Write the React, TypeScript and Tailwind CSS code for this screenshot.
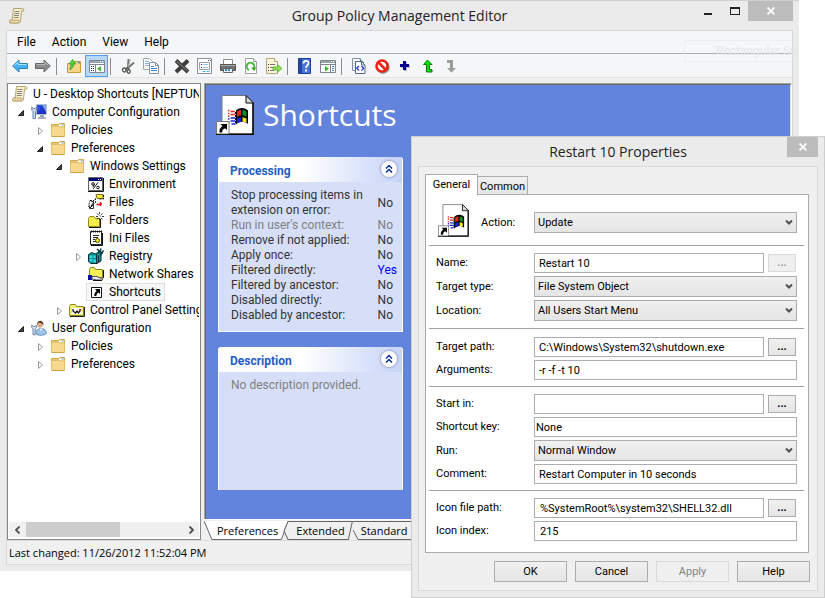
import React from 'react';

type IconProps = { className?: string };

const Svg: React.FC<{ size?: number; box?: string; className?: string; children: React.ReactNode }> = ({
  size = 16,
  box = '0 0 16 16',
  className,
  children
}) => (
  <svg width={size} height={size} viewBox={box} className={`shrink-0 ${className ?? ''}`} fill="none" aria-hidden="true">
    {children}
  </svg>
);

/* ---------- tree icons ---------- */

const ScrollIcon: React.FC<IconProps> = ({ className }) => (
  <Svg className={className}>
    <path d="M4.500.5h9c1.800 0 1.800 3 0 3h-1L11.500 13c-.2 1.600-1 2-2 2h-8c-1.500 0-1.500-3 .5-3h1.200z" fill="#f8efcd" stroke="#b3a47a" />
    <path d="M2 12h7.500c.8 0 .8 3-.5 3H2c-1.600 0-1.600-3 0-3z" stroke="#b9a672" fill="#ead9a4" />
    <path d="M12.500 1.500c1 0 1 1.500 0 1.500" stroke="#d9b765" />
    <path d="M5.500 3.500h5M5.300 5.500h5M5 7.500h5M4.800 9.500h5" stroke="#86867f" />
  </Svg>
);

const ComputerIcon = () => (
  <Svg>
    <path d="M5.500.5h10v10h-10z" fill="#1f35c4" stroke="#b7bfcc" />
    <path d="M6 1h5L8 7H6z" fill="#2f52d8" />
    <path d="M11 1h4v7z" fill="#7fa2f2" />
    <path d="M9 11h4v2H9z" fill="#9aa3b0" />
    <path d="M7 14h8" stroke="#a9b1bd" strokeWidth="2" />
    <path d="M.8 3v3.200L2 7.500v7h2.500v-7l1.200-1.300V3L4 4.500H2.500z" stroke="#6b87a8" fill="#c9d9ea" />
  </Svg>
);

const FolderIcon = () => (
  <Svg>
    <path d="M1.500 2.500h7l1-1h5v13h-13z" fill="#e9c66f" stroke="#d2a954" />
    <path d="M9 2.500h5v2H9z" fill="#fbfdff" />
    <path d="M12 2.500h1.500v1H12z" fill="#3f93dd" />
    <path d="M1.500 4.500h7l1 .5h5v9.500h-13z" fill="#f6d98d" stroke="#e3bd6c" />
    <path d="M2 14.500h12" stroke="#cfa24a" />
  </Svg>
);

const EnvironmentIcon = () => (
  <Svg>
    <path d="M.5 1.500h14v13H.5z" fill="#fff" stroke="#666" />
    <path d="M1 2h13v3H1z" fill="#00007b" />
    <path d="M10 3.500h4" stroke="#fff" strokeDasharray="1 1" />
    <circle cx="5" cy="8" r="1.300" stroke="#111" />
    <circle cx="10" cy="11.500" r="1.300" stroke="#111" />
    <path d="M5 13l5-6.500M6.500 8l-1.500 3" stroke="#111" />
    <path d="M0 15.500h15.500V2" stroke="#111" />
  </Svg>
);

const FilesIcon = () => (
  <Svg>
    <path d="M8 .5h7v4H9z" fill="#f5e832" stroke="#77741a" />
    <path d="M15.500 1v4H11" stroke="#111" strokeDasharray="2 1" />
    <path d="M2 6.500h4l1.500-2v4L3 12.500H.5z" fill="#fff" stroke="#222" strokeDasharray="2 1" />
    <path d="M5.500 8.500v6h-4v-3" fill="#eee" stroke="#333" />
    <path d="M3 7l3 1-3 4M2 14l3-3" stroke="#111" />
    <path d="M8.500 10.500h4M12.500 8v4M14 10h-2" stroke="#e01010" strokeWidth="1.500" />
  </Svg>
);

const FoldersIcon = () => (
  <Svg>
    <path d="M.5 6.500l1.500-2h4l1.500 2h4v8H.5z" fill="#f3ee4a" stroke="#8d8a1c" />
    <path d="M1 15.500h11.500V7" stroke="#111" />
    <path d="M11.500 0v9M8 4.500h8M9 1.500l5.500 6M14.500 1.500L9 7.500" stroke="#333" strokeDasharray="2 1" />
    <path d="M10.500 3.500h2v2h-2z" fill="#fff" />
  </Svg>
);

const IniIcon = () => (
  <Svg>
    <path d="M2.500 1.500h11v13h-11z" fill="#fff" stroke="#222" />
    <path d="M3 1.500h11" stroke="#111" strokeWidth="2" strokeDasharray="1 1" />
    <path d="M5 5.500h6M5 7.500h5M5 9.500h2M5 11.500h3" stroke="#222" />
    <circle cx="9.500" cy="10.500" r="2" fill="#f1e72a" stroke="#55520c" />
    <path d="M14.500 3v12.500H3" stroke="#111" />
  </Svg>
);

const RegistryIcon = () => (
  <Svg>
    <path d="M.5 6.500l3.500-2 3 1.500 4-2 2 2v7l-4 2.500H3l-2.500-2z" fill="#0a8f93" stroke="#062f33" />
    <path d="M1.500 7.500h3v2.500h-3zM1.500 11h3v2.500h-3zM5.500 11.500h2.500v3H5.500zM5.500 7.500h2v2.500h-2z" fill="#35dadd" />
    <path d="M8.500 6v9M10.500 7v7" stroke="#053236" />
    <path d="M9 1l2 2-1 2M13 .5l-1 3.500 3 1M15.500 2.500l-3 5" stroke="#0b3f44" strokeWidth="1.500" />
  </Svg>
);

const NetworkIcon = () => (
  <Svg>
    <path d="M1.500 3.500l1-2h4l1 2h7v8h-13z" fill="#f3ee55" stroke="#8d8a1c" />
    <path d="M15.500 4v8" stroke="#111" />
    <path d="M0 9h4v5H0z" fill="#10109a" />
    <path d="M4 10.500h5l3 1.500h2.500v2H9l-5-1z" fill="#e9eef5" stroke="#555" />
    <path d="M5 14.500h9" stroke="#111" />
  </Svg>
);

const ShortcutIcon = () => (
  <Svg>
    <path d="M3.500 3.500h10v10h-10z" fill="#fff" stroke="#111" />
    <path d="M7 5h5v5l-1.600-1.600C9 9.200 8.400 10.400 8.400 12H6.200c0-2.200.8-3.600 2.400-5z" fill="#000" />
  </Svg>
);

const ControlPanelIcon = () => (
  <Svg>
    <path d="M.5 4.500l1-2h5l1 2h7v9H.500z" fill="#f3ee70" stroke="#8d8a1c" />
    <path d="M3 6h10v6H3z" fill="#fff" />
    <path d="M4 7v2l2.500 2L8 9l1.500 2L12 7.500" stroke="#111" strokeWidth="1.300" />
    <path d="M10 7h2v2h-2z" fill="#d22" />
    <path d="M1 14.500h14.500V5" stroke="#222" />
  </Svg>
);

const UserIcon = () => (
  <Svg>
    <path d="M5 14c-.5-4 2-5.500 5-5.500s5.500 2 5.500 5c-2 2-8 2.500-10.500.5z" fill="#9cc3ea" stroke="#6b95c4" />
    <path d="M8.500 8.500L10 11l1.500-2.500z" fill="#fff" />
    <circle cx="9" cy="5" r="2.800" fill="#d9a77d" />
    <path d="M6 4.500c0-5 7-5 6.500 1-1-2.500-4-2.500-4.500-3z" fill="#50402f" />
    <path d="M.8 5v2.500L2 8.800v6h2.200v-6l1.200-1.300V5L4 6.500H2.500z" stroke="#6b87a8" fill="#d8e4f0" />
  </Svg>
);

/* page with the flag and the arrow in its corner */
const ShortcutPage: React.FC<IconProps> = ({ className }) => (
  <svg viewBox="0 0 38 40" className={`shrink-0 ${className ?? ''}`} fill="none" aria-hidden="true">
    <path d="M6 .5h24l7 7v31.500H6z" fill="#fff" stroke="#777" />
    <path d="M37 8v31.200H12" stroke="#000" strokeWidth="1.500" />
    <path d="M30 .5v7.500h7.500z" fill="#ddd" stroke="#000" />
    <path d="M20 15.500c3-3 8-3.500 12 0v13.500c-4-3.200-9-3-12.500 1z" fill="#000" />
    <path d="M21 16.500c1.500-1.200 2.500-1.500 4-1.500v5.500c-1.500 0-2.800.5-4 1.500z" fill="#e02a1d" />
    <path d="M26.500 15c1.700.2 2.800.8 4 1.700v5c-1.200-.7-2.400-1.100-4-1.200z" fill="#0f8f1c" />
    <path d="M21 23.700c1.300-1 2.500-1.400 4-1.500V27c-1.500.1-2.800.6-4 1.600z" fill="#1822d8" />
    <path d="M26.500 22.200c1.500.1 2.800.6 4 1.400v4.200c-1.200-.6-2.500-1-4-1z" fill="#f3e418" />
    <path d="M12 15.500h1.500M14.500 16.500h4.500M12 18.500h1.500M14.500 19.500h4.500M12 21.300h1.500" stroke="#e02a1d" strokeWidth="1.600" />
    <path d="M12 24h1.500M14.500 23h4.500M12 27h1.500M14.500 26h4.500M15.500 29h3.500" stroke="#1822d8" strokeWidth="1.600" />
    <path d="M19.500 17v12" stroke="#000" strokeDasharray="2 1" />
    <path d="M.5 26.500h12.500v12.800H.5z" fill="#fff" stroke="#777" />
    <path d="M0 39.300h13.500" stroke="#000" />
    <path d="M4.500 29h6.500v6l-2-1.700c-2 .7-2.800 2-2.800 4.200H3.500c-.5-3 .8-5 3-6.500z" fill="#000" />
  </svg>
);

/* ---------- toolbar icons ---------- */

const BackIcon = () => (
  <Svg>
    <path d="M.7 8l6.300-6v3.500h8.500v5H7V14z" fill="#45b3f2" stroke="#2f7fb8" />
    <path d="M2.500 7.500L6 4.300v2.200h8.500" stroke="#a9e0ff" />
  </Svg>
);
const ForwardIcon = () => (
  <Svg>
    <path d="M15.300 8L9 2v3.500H.5v5H9V14z" fill="#8b8b8b" stroke="#666" />
    <path d="M1.500 6.500H10V4.300L13.500 7.500" stroke="#b9b9b9" />
  </Svg>
);
const UpFolderIcon = () => (
  <Svg>
    <path d="M1.500 5.500h6l1-2h6v11h-13z" fill="#f5d484" stroke="#c89b3e" />
    <path d="M12 4.500h2" stroke="#4a9be0" strokeWidth="2" />
    <path d="M3.500 11.500c3-.5 4-2.500 4-5.500H10L6.500 1.500 3 6h2c0 2-.5 4-1.500 5.500z" fill="#55cf3a" stroke="#2b9a1c" strokeWidth=".7" />
  </Svg>
);
const PaneIcon: React.FC<{ play?: boolean }> = ({ play }) => (
  <Svg>
    <path d="M.5 2.500h15v12H.5z" fill="#fff" stroke="#7d8690" />
    <path d="M1 4h14" stroke="#9aa4ae" strokeWidth="2" />
    <path d="M11 3.500h1M13 3.500h1" stroke="#fff" />
    <path d="M0 6.500h16" stroke="#7d8690" />
    {play ? (
      <>
        <path d="M10.500 7v7" stroke="#7d8690" />
        <path d="M5 8l4 2.700L5 13.500z" fill="#38b52a" />
        <path d="M12 8.500h2M12 10.500h2M12 12.500h2" stroke="#4b79b8" />
      </>
    ) : (
      <>
        <path d="M6.500 7v7" stroke="#7d8690" />
        <path d="M12 8l-4 2.700 4 2.800z" fill="#38b52a" />
        <path d="M2 8.500h1M4 8.500h1M2 10.500h1M4 10.500h1M2 12.500h1M4 12.500h1" stroke="#333" />
      </>
    )}
  </Svg>
);
const CutIcon = () => (
  <Svg>
    <path d="M8.500 1L8 9.500M14 4.500l-6.500 6" stroke="#777" strokeWidth="2" />
    <path d="M10.500 1.500L8 9" stroke="#aaa" />
    <path d="M7.500 9.500l-2 2M8.500 10.500v2" stroke="#444" strokeWidth="1.500" />
    <ellipse cx="4.300" cy="12" rx="1.800" ry="2" stroke="#555" strokeWidth="1.300" />
    <ellipse cx="8.700" cy="13.300" rx="1.500" ry="2" stroke="#555" strokeWidth="1.300" />
  </Svg>
);
const CopyIcon = () => (
  <Svg>
    <path d="M.5.5h6l3 3v8h-9z" fill="#fff" stroke="#9aa6b3" />
    <path d="M2 3.500h4M2 5.500h5M2 7.500h5" stroke="#86aee0" />
    <path d="M6.500 4.500h6l3 3v8h-9z" fill="#fff" stroke="#8593a3" />
    <path d="M12.500 4.500v3h3" stroke="#8593a3" />
    <path d="M8 8.500h3M8 10.500h6M8 12.500h6" stroke="#3f86d8" />
  </Svg>
);
const DeleteIcon = () => (
  <Svg>
    <path d="M2 2.500l12 11.500M14 2.500L2 14" stroke="#3c3c3c" strokeWidth="4" />
    <path d="M2.500 3l11 10" stroke="#6a6a6a" strokeWidth="1.500" />
  </Svg>
);
const PropsIcon = () => (
  <Svg>
    <path d="M.5.5h14v15H.5z" fill="#fff" stroke="#8a8f95" />
    <path d="M11 2.500h1M13 2.500h1" stroke="#555" />
    <path d="M2.500 4.500h10v7h-10z" fill="#fff" stroke="#9aa0a7" />
    <path d="M4 6.500h1M4 9.500h1" stroke="#222" />
    <path d="M6 6.500h5M6 9.500h5" stroke="#8fc4dc" />
    <path d="M5.500 13.500h3M9.500 13.500h3" stroke="#3fb6e0" />
  </Svg>
);
const PrintIcon = () => (
  <Svg>
    <path d="M3.500 1.500h9v5h-9z" fill="#fff" stroke="#8e8e8e" />
    <path d="M.5 6.500h15v6H.5z" fill="#707070" stroke="#555" />
    <path d="M1 7.500h14" stroke="#aaa" />
    <path d="M3.500 10.500h9v4h-9z" fill="#eef4fa" stroke="#666" />
    <path d="M5 12h6" stroke="#2f84d2" strokeWidth="2" strokeDasharray="2 1" />
  </Svg>
);
const RefreshIcon = () => (
  <Svg>
    <path d="M2.500.5h8l3 3v12h-11z" fill="#fff" stroke="#a0a0a0" />
    <path d="M10.500.5v3h3" stroke="#a0a0a0" fill="#eee" />
    <path d="M6 12a3.800 3.800 0 1 1 5-2" stroke="#46b93a" strokeWidth="2" />
    <path d="M8 9.500h5.500L11 13z" fill="#35a82a" />
  </Svg>
);
const ExportIcon = () => (
  <Svg>
    <path d="M.5.5h8l3 3v12H.5z" fill="#fdf5d8" stroke="#b3a77d" />
    <path d="M8.500.5v3h3" fill="#fff" stroke="#b3a77d" />
    <path d="M2 6.500h1M2 9.500h1M2 12.500h1" stroke="#333" />
    <path d="M4 6.500h5M4 9.500h3M4 12.500h4" stroke="#777" />
    <path d="M7 9h4.500V6.500L16 10.500l-4.500 4V12H7z" fill="#8fdc5a" stroke="#4bb02e" strokeWidth=".7" />
  </Svg>
);
const HelpIcon = () => (
  <Svg>
    <path d="M1.500.500h12v15h-12z" fill="#4a73d8" stroke="#1d3c96" />
    <path d="M2 1h3v14H2z" fill="#2446a4" />
    <path d="M6.500 5.500c0-3.500 5-3.500 5-.5 0 2.500-2.500 2.500-2.500 5" stroke="#fff" strokeWidth="1.800" />
    <path d="M8 11.500h2v2H8z" fill="#fff" />
  </Svg>
);
const XmlPageIcon = () => (
  <Svg>
    <path d="M1.500.5h8v12h-8z" fill="#fff" stroke="#8593a3" />
    <path d="M2.500 3.500h2M2.500 5.500h2M2.500 7.500h2M2.500 9.500h2" stroke="#b9c7d8" />
    <path d="M8 .5l5 4-1 3z" fill="#2b6c8f" />
    <path d="M4.500 3.500h6l3.500 3.500v8.500H4.500z" fill="#fff" stroke="#4f6a8c" />
    <path d="M8 8L5.800 10.300 8 12.600M10.500 8l2.200 2.300-2.200 2.300" stroke="#2534c9" strokeWidth="1.300" />
    <path d="M10.500 3.500V7H14" stroke="#4f6a8c" />
  </Svg>
);
const StopIcon = () => (
  <Svg>
    <circle cx="9" cy="9" r="5.500" stroke="#8d8d8d" strokeWidth="2.500" />
    <circle cx="8" cy="8" r="5.500" stroke="#f02314" strokeWidth="2.600" fill="#fff" />
    <path d="M4.500 4.500l7 7" stroke="#f02314" strokeWidth="2.600" />
  </Svg>
);
const PlusIcon = () => (
  <Svg>
    <path d="M7 4h3v3h3v3h-3v3H7v-3H4V7h3z" fill="#b5b5c5" />
    <path d="M6 3h3v3h3v3H9v3H6V9H3V6h3z" fill="#00008b" />
  </Svg>
);
const UpIcon = () => (
  <Svg>
    <path d="M7.500 2L12 6.500H9.500v5H12v2.500H6.500V6.500H3.500z" fill="#0be00b" stroke="#087b08" />
  </Svg>
);
const DownIcon = () => (
  <Svg>
    <path d="M4 2h6v8h3l-4.500 4.500L4 10h3V5H4z" fill="#9b9b9b" />
  </Svg>
);

const toolGroups: { label: string; icon: React.ReactNode; active?: boolean }[][] = [
  [
    { label: 'Back', icon: <BackIcon /> },
    { label: 'Forward', icon: <ForwardIcon /> }
  ],
  [
    { label: 'Up one level', icon: <UpFolderIcon /> },
    { label: 'Show or hide console tree', icon: <PaneIcon />, active: true }
  ],
  [
    { label: 'Cut', icon: <CutIcon /> },
    { label: 'Copy', icon: <CopyIcon /> }
  ],
  [
    { label: 'Delete', icon: <DeleteIcon /> },
    { label: 'Properties', icon: <PropsIcon /> },
    { label: 'Print', icon: <PrintIcon /> },
    { label: 'Refresh', icon: <RefreshIcon /> },
    { label: 'Export list', icon: <ExportIcon /> }
  ],
  [
    { label: 'Help', icon: <HelpIcon /> },
    { label: 'Show or hide action pane', icon: <PaneIcon play /> }
  ],
  [
    { label: 'Show XML', icon: <XmlPageIcon /> },
    { label: 'Disable', icon: <StopIcon /> },
    { label: 'Add', icon: <PlusIcon /> },
    { label: 'Move up', icon: <UpIcon /> },
    { label: 'Move down', icon: <DownIcon /> }
  ]
];

/* ---------- data ---------- */

interface TreeNode {
  label: string;
  level: number;
  icon: React.ReactNode;
  state?: 'open' | 'closed';
  selected?: boolean;
}

const tree: TreeNode[] = [
  { label: 'U - Desktop Shortcuts [NEPTUN', level: 0, icon: <ScrollIcon /> },
  { label: 'Computer Configuration', level: 1, icon: <ComputerIcon />, state: 'open' },
  { label: 'Policies', level: 2, icon: <FolderIcon />, state: 'closed' },
  { label: 'Preferences', level: 2, icon: <FolderIcon />, state: 'open' },
  { label: 'Windows Settings', level: 3, icon: <FolderIcon />, state: 'open' },
  { label: 'Environment', level: 4, icon: <EnvironmentIcon /> },
  { label: 'Files', level: 4, icon: <FilesIcon /> },
  { label: 'Folders', level: 4, icon: <FoldersIcon /> },
  { label: 'Ini Files', level: 4, icon: <IniIcon /> },
  { label: 'Registry', level: 4, icon: <RegistryIcon />, state: 'closed' },
  { label: 'Network Shares', level: 4, icon: <NetworkIcon /> },
  { label: 'Shortcuts', level: 4, icon: <ShortcutIcon />, selected: true },
  { label: 'Control Panel Settings', level: 3, icon: <ControlPanelIcon />, state: 'closed' },
  { label: 'User Configuration', level: 1, icon: <UserIcon />, state: 'open' },
  { label: 'Policies', level: 2, icon: <FolderIcon />, state: 'closed' },
  { label: 'Preferences', level: 2, icon: <FolderIcon />, state: 'closed' }
];

const indents = ['pl-px', 'pl-2', 'pl-[27px]', 'pl-[46px]', 'pl-[65px]'];

const processing = [
  { label: 'Stop processing items in extension on error:', value: 'No' },
  { label: "Run in user's context:", value: 'No', tone: 'text-[#808080]' },
  { label: 'Remove if not applied:', value: 'No' },
  { label: 'Apply once:', value: 'No' },
  { label: 'Filtered directly:', value: 'Yes', valueTone: 'text-[#0000ff]' },
  { label: 'Filtered by ancestor:', value: 'No' },
  { label: 'Disabled directly:', value: 'No' },
  { label: 'Disabled by ancestor:', value: 'No' }
];

/* ---------- main window ---------- */

const Twisty: React.FC<{ state?: 'open' | 'closed' }> = ({ state }) => (
  <span className="flex w-3 shrink-0 items-center pt-0.5">
    {state === 'open' && (
      <Svg size={8} box="0 0 8 8">
        <path d="M6.500 1.500v5h-5z" fill="#444" stroke="#222" />
      </Svg>
    )}
    {state === 'closed' && (
      <Svg size={8} box="0 0 8 8">
        <path d="M2.500.5L6.500 4l-4 3.500z" fill="#fff" stroke="#999" />
      </Svg>
    )}
  </span>
);

const TreePane = () => (
  <div className="flex w-[194px] shrink-0 flex-col border border-[#828790] bg-white px-px pt-px pb-0.5">
    <ul className="flex-1 overflow-hidden">
      {tree.map((node, i) => (
        <li key={i} className={`flex h-[18px] items-center ${indents[node.level]}`}>
          {node.level > 0 && <Twisty state={node.state} />}
          <button
            className={`flex h-[18px] shrink-0 items-center gap-[5px] border pl-px pr-[3px] whitespace-nowrap ${
              node.selected ? 'border-[#dedede] bg-[#f7f7f7]' : 'border-transparent'
            }`}
          >
            {node.icon}
            {node.label}
          </button>
        </li>
      ))}
    </ul>
    <div className="flex h-[15px] items-center bg-[#f0f0f0]">
      <button aria-label="Scroll left" className="flex w-[17px] justify-center">
        <Svg size={8} box="0 0 8 8">
          <path d="M5.500.500L2 4l3.500 3.500" stroke="#505050" strokeWidth="1.800" />
        </Svg>
      </button>
      <div className="flex-1 self-stretch">
        <div className="h-full w-3/5 bg-[#cdcdcd]" />
      </div>
      <button aria-label="Scroll right" className="flex w-[17px] justify-center">
        <Svg size={8} box="0 0 8 8">
          <path d="M2.500.500L6 4 2.500 7.500" stroke="#505050" strokeWidth="1.800" />
        </Svg>
      </button>
    </div>
  </div>
);

const Card: React.FC<{ title: string; className?: string; children: React.ReactNode }> = ({ title, className, children }) => (
  <section className={`w-[185px] rounded-t-[3px] border border-t-0 border-white bg-[#d6dff7] ${className ?? ''}`}>
    <header className="flex h-[25px] items-center justify-between rounded-t-[3px] bg-linear-to-r from-white from-45% to-[#c6d3f7] pr-[5px] pb-0.5 pl-[11px]">
      <h2 className="pt-[5px] text-[12px] leading-[20px] font-bold text-[#215dc6]">{title}</h2>
      <button aria-label={`Collapse ${title}`} className="flex h-4 w-4 items-center justify-center rounded-full bg-white shadow-[0_0_2px_1px_#9aa8d0]">
        <Svg size={10} box="0 0 10 10">
          <path d="M2 4.500l3-3 3 3M2 8.500l3-3 3 3" stroke="#0a2f96" strokeWidth="1.500" />
        </Svg>
      </button>
    </header>
    {children}
  </section>
);

const SheetTabs = () => (
  <div className="flex h-[20px] items-stretch pt-px font-['Open_Sans',sans-serif] text-[11px]">
    <div className="relative">
      <svg className="absolute inset-0 h-full w-full" viewBox="0 0 85 19" preserveAspectRatio="none" aria-hidden="true">
        <path d="M0 0l8 18.500h70L85 0z" fill="#fff" />
        <path d="M0 0l8 18.500h70L85 .5" fill="none" stroke="#666" />
      </svg>
      <button className="relative pr-2.5 pl-[13px] leading-[20px]">Preferences</button>
    </div>
    <div className="relative">
      <svg className="absolute inset-0 h-full w-full overflow-visible" viewBox="0 0 64 19" preserveAspectRatio="none" aria-hidden="true">
        <path d="M0 .5L-4 10l4 8.500h60L64 .5z" fill="#f0f0f0" stroke="#666" />
      </svg>
      <button className="relative px-2 leading-[20px]">Extended</button>
    </div>
    <div className="relative flex-1 border-t border-[#666]">
      <svg className="absolute inset-y-0 left-0 h-full w-[64px]" viewBox="0 0 64 18" preserveAspectRatio="none" aria-hidden="true">
        <path d="M0 8l5 9.500h54L64 8" fill="none" stroke="#666" />
      </svg>
      <button className="relative w-full pl-[8px] text-left leading-[18px]">Standard</button>
    </div>
  </div>
);

const DetailPane = () => (
  <div className="flex flex-1 flex-col">
    <div className="flex-1 border-t border-l border-[#a0a0a0] border-r border-r-white">
      <div className="h-full border-t border-l border-[#696969] border-r border-r-[#e3e3e3] bg-[#6284dd] pl-3">
        <div className="flex h-[72px] items-center gap-[9px] pb-3">
          <ShortcutPage className="-ml-0.5 h-10 w-[38px]" />
          <h1 className="font-['Open_Sans',sans-serif] text-[30px] leading-[40px] text-white">Shortcuts</h1>
        </div>
        <Card title="Processing">
          <table className="mx-3 mt-1.5 mb-2 w-[166px] text-[#333]">
            <tbody>
              {processing.map((row) => (
                <tr key={row.label} className={`leading-[15px] ${row.tone ?? ''}`}>
                  <th scope="row" className="w-[149px] pr-2 text-left font-normal">
                    {row.label}
                  </th>
                  <td className={row.valueTone ?? ''}>{row.value}</td>
                </tr>
              ))}
            </tbody>
          </table>
        </Card>
        <Card title="Description" className="mt-[15px] h-[143px] border-b-0">
          <p className="px-3 pt-1.5 leading-[15px] text-[#808080]">No description provided.</p>
        </Card>
      </div>
    </div>
    <div className="h-px bg-white" />
    <SheetTabs />
  </div>
);

const EditorWindow = () => (
  <div className="relative flex flex-1 flex-col overflow-hidden border-t border-[#d0d0d0] bg-[#ebebeb] px-1.5 pb-1.5 text-[12px] text-black">
    <header className="relative flex h-[29px] items-center justify-center">
      <ScrollIcon className="absolute top-[7px] left-[3px]" />
      <div className="font-['Open_Sans',sans-serif] text-[14px] leading-[20px] text-[#222]">Group Policy Management Editor</div>
      <div className="absolute top-0 right-0 flex h-5 items-center">
        <button aria-label="Minimize" className="flex w-[27px] justify-center pt-1.5">
          <span className="h-0.5 w-2 bg-[#222]" />
        </button>
        <button aria-label="Maximize" className="flex w-[27px] justify-center">
          <span className="h-2 w-2.5 border border-t-2 border-[#222]" />
        </button>
        <button aria-label="Close" className="flex h-5 w-[45px] items-center justify-center bg-[#bcbcbc]">
          <Svg size={8} box="0 0 8 8">
            <path d="M.5.500l7 7M7.500.500l-7 7" stroke="#fff" strokeWidth="1.800" />
          </Svg>
        </button>
      </div>
    </header>

    <div className="flex flex-1 flex-col border border-[#d9d9d9] bg-[#f0f0f0]">
      <nav className="flex h-[23px] items-center gap-4 border-b border-[#a9abb0] bg-[#f5f6f7] pl-2.5">
        <button>File</button>
        <button>Action</button>
        <button>View</button>
        <button>Help</button>
      </nav>
      <div className="flex h-6 items-center border-b border-[#e3e3e3] bg-[#f5f6f7] pt-px pl-px">
        {toolGroups.map((group, g) => (
          <div key={g} className="flex items-center">
            {g > 0 && <span className="mr-[5px] ml-0.5 h-[17px] w-px bg-[#8d8d8d]" />}
            {group.map((tool) => (
              <button
                key={tool.label}
                aria-label={tool.label}
                className={`flex h-[22px] w-[23px] items-center justify-center ${
                  tool.active ? 'border border-[#569de5] bg-[#b8d8f9]' : ''
                }`}
              >
                {tool.icon}
              </button>
            ))}
          </div>
        ))}
      </div>
      <div className="mt-[5px] flex flex-1 gap-[3px]">
        <TreePane />
        <DetailPane />
      </div>
      <footer className="h-6 border-t border-[#dcdcdc] pl-0.5 font-['Open_Sans',sans-serif] text-[11px] leading-[24px]">
        Last changed: 11/26/2012 11:52:04 PM
      </footer>
    </div>

    <div className="absolute top-[39px] right-0 h-[22px] w-[115px] overflow-hidden border border-r-0 border-[#e6e8e9]/60 pl-[31px] leading-[20px] whitespace-nowrap text-[#e6e8e9]">
      Rectangular Sni
    </div>
  </div>
);

/* ---------- properties dialog ---------- */

const FieldRow: React.FC<{ id: string; label: string; children: React.ReactNode }> = ({ id, label, children }) => (
  <div className="flex items-center">
    <label htmlFor={id} className="w-[98px] shrink-0 pt-px">
      {label}
    </label>
    {children}
  </div>
);

const TextField: React.FC<{ id: string; value: string; inset?: string }> = ({ id, value, inset = 'pl-1' }) => (
  <input
    id={id}
    type="text"
    defaultValue={value}
    className={`h-5 min-w-0 flex-1 border border-[#abadb3] bg-white ${inset}`}
  />
);

const BrowseButton: React.FC<{ label: string; disabled?: boolean }> = ({ label, disabled }) => (
  <button
    aria-label={label}
    disabled={disabled}
    className="mr-px ml-1 flex h-[18px] w-7 items-center justify-center border border-[#acacac] bg-linear-to-b from-[#f0f0f0] to-[#e5e5e5] font-bold disabled:border-[#d9d9d9] disabled:bg-[#efefef] disabled:bg-none disabled:text-[#a0a0a0]"
  >
    ...
  </button>
);

const SelectField: React.FC<{ id: string; value: string }> = ({ id, value }) => (
  <div className="relative flex min-w-0 flex-1">
    <select
      id={id}
      defaultValue={value}
      className="h-[21px] w-full appearance-none border border-[#acacac] bg-linear-to-b from-[#f0f0f0] to-[#e5e5e5] pt-0.5 pl-[3px]"
    >
      <option>{value}</option>
    </select>
    <Svg size={8} box="0 0 8 8" className="pointer-events-none absolute top-[7px] right-1">
      <path d="M1 1.500l3 3 3-3" stroke="#505050" strokeWidth="2" />
    </Svg>
  </div>
);

const DialogButton: React.FC<{ label: string; disabled?: boolean }> = ({ label, disabled }) => (
  <button
    disabled={disabled}
    className="h-[21px] w-[73px] border border-[#acacac] bg-linear-to-b from-[#f0f0f0] to-[#e5e5e5] pt-px disabled:border-[#d9d9d9] disabled:bg-[#efefef] disabled:bg-none disabled:text-[#838383]"
  >
    {label}
  </button>
);

const PropertiesDialog = () => (
  <div
    role="dialog"
    aria-label="Restart 10 Properties"
    className="absolute top-[136px] right-0 w-[414px] border border-[#cfcfcf] bg-[#ebebeb] px-1.5 pb-1.5 text-[11px] text-black"
  >
    <header className="relative flex h-[29px] items-center justify-center">
      <h2 className="font-['Open_Sans',sans-serif] text-[14px] leading-[20px] text-[#222]">Restart 10 Properties</h2>
      <button aria-label="Close dialog" className="absolute top-0 right-0 flex h-5 w-[31px] items-center justify-center bg-[#bcbcbc]">
        <Svg size={8} box="0 0 8 8">
          <path d="M.5.500l7 7M7.500.500l-7 7" stroke="#fff" strokeWidth="1.800" />
        </Svg>
      </button>
    </header>

    <div className="border border-[#d9d9d9] bg-[#f0f0f0] pt-[7px] pr-[7px] pb-2 pl-1.5">
      <div role="tablist" className="flex items-end">
        <button role="tab" aria-selected="true" className="relative -mb-px h-[21px] w-[53px] border border-b-0 border-[#acacac] bg-white leading-[18px]">
          General
        </button>
        <button role="tab" aria-selected="false" className="h-[18px] w-[50px] border border-b-0 border-l-0 border-[#acacac] bg-linear-to-b from-[#f0f0f0] to-[#e5e5e5] pt-px leading-[18px]">
          Common
        </button>
      </div>

      <div className="mr-px border border-[#acacac] bg-white pt-[9px] pr-1 pl-[3px]">
        <div className="flex h-[42px] border-b border-[#a0a0a0] pr-[7px] pb-1 pl-[9px]">
          <ShortcutPage className="h-[33px] w-[31px]" />
          <div className="flex flex-1 items-center pl-3">
            <label htmlFor="action" className="w-[53px] shrink-0 pt-px">
              Action:
            </label>
            <SelectField id="action" value="Update" />
          </div>
        </div>

        <div className="flex flex-col gap-[3px] border-b border-[#a0a0a0] py-[7px] pr-[7px] pl-[7px]">
          <FieldRow id="name" label="Name:">
            <TextField id="name" value="Restart 10" />
            <BrowseButton label="Browse name" disabled />
          </FieldRow>
          <FieldRow id="target-type" label="Target type:">
            <SelectField id="target-type" value="File System Object" />
          </FieldRow>
          <FieldRow id="location" label="Location:">
            <SelectField id="location" value="All Users Start Menu" />
          </FieldRow>
        </div>

        <div className="flex flex-col gap-[3px] border-b border-[#a0a0a0] px-[7px] pt-2 pb-1.5">
          <FieldRow id="target-path" label="Target path:">
            <TextField id="target-path" value="C:\Windows\System32\shutdown.exe" />
            <BrowseButton label="Browse target path" />
          </FieldRow>
          <FieldRow id="arguments" label="Arguments:">
            <TextField id="arguments" value="-r -f -t 10" />
          </FieldRow>
        </div>

        <div className="flex flex-col gap-[3px] border-b border-[#a0a0a0] px-[7px] pt-[7px] pb-1.5">
          <FieldRow id="start-in" label="Start in:">
            <TextField id="start-in" value="" />
            <BrowseButton label="Browse start folder" />
          </FieldRow>
          <FieldRow id="shortcut-key" label="Shortcut key:">
            <TextField id="shortcut-key" value="None" inset="pl-px" />
          </FieldRow>
          <FieldRow id="run" label="Run:">
            <SelectField id="run" value="Normal Window" />
          </FieldRow>
          <FieldRow id="comment" label="Comment:">
            <TextField id="comment" value="Restart Computer in 10 seconds" />
          </FieldRow>
        </div>

        <div className="flex flex-col gap-[3px] px-[7px] pt-[7px] pb-[11px]">
          <FieldRow id="icon-path" label="Icon file path:">
            <TextField id="icon-path" value="%SystemRoot%\system32\SHELL32.dll" inset="pl-[5px]" />
            <BrowseButton label="Browse icon" />
          </FieldRow>
          <FieldRow id="icon-index" label="Icon index:">
            <TextField id="icon-index" value="215" inset="pl-[5px]" />
          </FieldRow>
        </div>
      </div>

      <div className="mt-2 flex justify-end gap-2">
        <DialogButton label="OK" />
        <DialogButton label="Cancel" />
        <DialogButton label="Apply" disabled />
        <DialogButton label="Help" />
      </div>
    </div>
  </div>
);

export default function App() {
  return (
    <div className="relative flex min-h-screen bg-white pr-[26px] pb-[27px] font-['Roboto',sans-serif]">
      <EditorWindow />
      <PropertiesDialog />
    </div>
  );
}
